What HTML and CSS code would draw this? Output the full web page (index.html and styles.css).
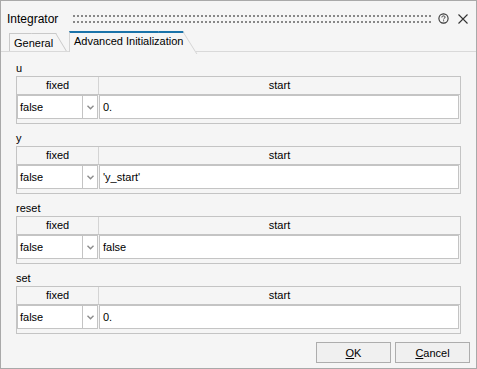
FILE: index.html
```html
<!DOCTYPE html>
<html>
<head>
<meta charset="utf-8">
<link rel="stylesheet" href="styles.css">
</head>
<body>
<div class="dlg">
  <div class="titlebar">
    <span class="title">Integrator</span>
    <span class="grip"></span>
    <svg class="help" width="11" height="11" viewBox="0 0 11 11"><circle cx="5.5" cy="5.5" r="4.6" fill="none" stroke="#333" stroke-width="1.1"/><path d="M3.9 4.4 C3.9 3.3 4.6 2.9 5.5 2.9 C6.4 2.9 7.1 3.4 7.1 4.2 C7.1 5.2 5.6 5.3 5.6 6.4" fill="none" stroke="#333" stroke-width="1"/><rect x="5.1" y="7.3" width="1" height="1" fill="#333"/></svg>
    <svg class="close" width="10" height="10" viewBox="0 0 10 10"><path d="M0.5 0.5 L9.5 9.5 M9.5 0.5 L0.5 9.5" stroke="#333" stroke-width="1.1"/></svg>
  </div>
  <div class="tabs">
    <div class="tab">General</div>
    <div class="tab active">Advanced Initialization</div>
  </div>
  <div class="panel">
    <div class="group">
      <div class="glabel">u</div>
      <div class="table">
        <div class="head"><div class="hcell hfixed">fixed</div><div class="hcell">start</div></div>
        <div class="row">
          <div class="combo"><span class="cval">false</span><span class="cbtn"><svg width="7" height="5" viewBox="0 0 7 5"><path d="M0.5 0.8 L3.5 3.8 L6.5 0.8" fill="none" stroke="#8c8c8c" stroke-width="1.4"/></svg></span></div>
          <div class="start">0.</div>
        </div>
      </div>
    </div>
    <div class="group">
      <div class="glabel">y</div>
      <div class="table">
        <div class="head"><div class="hcell hfixed">fixed</div><div class="hcell">start</div></div>
        <div class="row">
          <div class="combo"><span class="cval">false</span><span class="cbtn"><svg width="7" height="5" viewBox="0 0 7 5"><path d="M0.5 0.8 L3.5 3.8 L6.5 0.8" fill="none" stroke="#8c8c8c" stroke-width="1.4"/></svg></span></div>
          <div class="start">'y_start'</div>
        </div>
      </div>
    </div>
    <div class="group">
      <div class="glabel">reset</div>
      <div class="table">
        <div class="head"><div class="hcell hfixed">fixed</div><div class="hcell">start</div></div>
        <div class="row">
          <div class="combo"><span class="cval">false</span><span class="cbtn"><svg width="7" height="5" viewBox="0 0 7 5"><path d="M0.5 0.8 L3.5 3.8 L6.5 0.8" fill="none" stroke="#8c8c8c" stroke-width="1.4"/></svg></span></div>
          <div class="start">false</div>
        </div>
      </div>
    </div>
    <div class="group">
      <div class="glabel">set</div>
      <div class="table">
        <div class="head"><div class="hcell hfixed">fixed</div><div class="hcell">start</div></div>
        <div class="row">
          <div class="combo"><span class="cval">false</span><span class="cbtn"><svg width="7" height="5" viewBox="0 0 7 5"><path d="M0.5 0.8 L3.5 3.8 L6.5 0.8" fill="none" stroke="#8c8c8c" stroke-width="1.4"/></svg></span></div>
          <div class="start">0.</div>
        </div>
      </div>
    </div>
    <div class="footer">
      <button class="btn"><u>O</u>K</button>
      <button class="btn"><u>C</u>ancel</button>
    </div>
  </div>
</div>
</body>
</html>
```
FILE: styles.css
```css
html, body { margin: 0; padding: 0; }
body { font-family: "Liberation Sans", Arial, sans-serif; font-size: 11px; color: #000; background: #f5f5f5; }
.dlg { width: 477px; height: 369px; box-sizing: border-box; border: 1px solid #a9a9a9; background: #f5f5f5; display: flex; flex-direction: column; }
.titlebar { height: 30px; box-sizing: border-box; padding: 5px 8px 0 6px; display: flex; align-items: center; }
.title { font-size: 12px; }
.grip { flex: 1; height: 8px; margin: 0 6px 0 15px;
  background-image: linear-gradient(to right, #888 2px, transparent 2px), linear-gradient(to right, #888 2px, transparent 2px);
  background-size: 4px 2px, 4px 2px; background-repeat: repeat-x, repeat-x; background-position: 0 0, 0 6px; }
.help { margin-right: 9px; }
.tabs { height: 21px; box-sizing: border-box; display: flex; align-items: flex-end; padding-left: 8px; border-bottom: 1px solid #d9d9d9; gap: 13px; }
.tab { position: relative; z-index: 0; height: 18px; box-sizing: border-box; border-top: 1px solid #c9c9c9; border-left: 1px solid #c9c9c9; padding: 3px 0 0 4px; width: 47px; background: #f5f5f5; white-space: nowrap; }
.tab::after { content: ""; position: absolute; z-index: -1; top: -1px; right: 0; width: 24px; height: 100%; border-top: 1px solid #c9c9c9; border-right: 1px solid #c9c9c9; background: #f5f5f5; transform: skewX(31deg); transform-origin: top right; }
.tab.active { height: 21px; width: 114px; border-top: 2px solid #1a73a9; border-left-color: #d4d4d4; margin-bottom: -1px; padding-top: 2px; }
.tab.active::after { top: -2px; height: calc(100% + 2px); border-top: 2px solid #1a73a9; border-right-color: #d4d4d4; transform: skewX(32deg); }
.panel { flex: 1; padding: 8px 15px 0 15px; display: flex; flex-direction: column; gap: 6px; }
.glabel { height: 16px; line-height: 16px; }
.table { height: 48px; box-sizing: border-box; border: 1px solid #c4c4c4; }
.head { display: flex; height: 18px; box-sizing: border-box; border-bottom: 1px solid #c4c4c4; }
.hcell { flex: 1; text-align: center; line-height: 17px; }
.hcell.hfixed { flex: none; width: 82px; box-sizing: border-box; border-right: 1px solid #d4d4d4; }
.row { display: flex; gap: 1px; padding-right: 1px; height: 24px; }
.combo { width: 81px; box-sizing: border-box; border: 1px solid #c4c4c4; background: #fff; display: flex; }
.cval { flex: 1; padding-left: 2px; line-height: 22px; }
.cbtn { width: 14px; border-left: 1px solid #c4c4c4; display: flex; align-items: center; justify-content: center; }
.start { flex: 1; box-sizing: border-box; border: 1px solid #c4c4c4; background: #fff; padding-left: 3px; line-height: 22px; }
.footer { display: flex; justify-content: flex-end; gap: 4px; margin-top: 2px; margin-right: -9px; }
.btn { width: 75px; height: 21px; box-sizing: border-box; border: 1px solid #adadad; background: #f0f0f0; font: inherit; font-size: 11px; color: #000; padding: 0; }
.btn u { text-decoration: underline; }
```
